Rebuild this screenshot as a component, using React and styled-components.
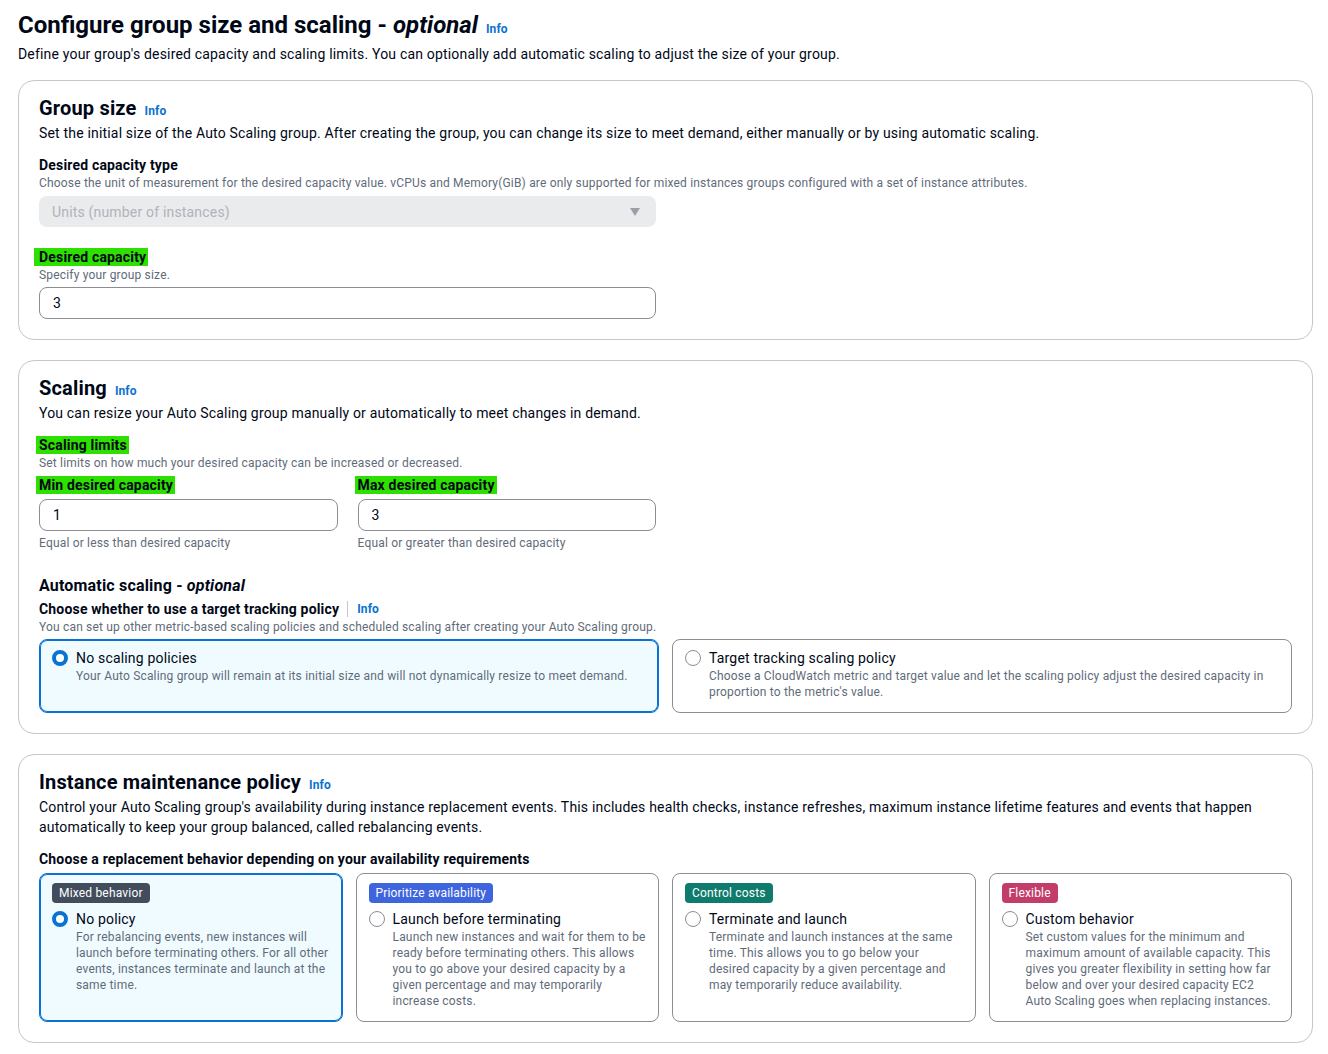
import React from 'react'
import styled, { createGlobalStyle } from 'styled-components'

const GlobalStyle = createGlobalStyle`
  * { box-sizing: border-box; }
  body {
    margin: 0;
    background: #ffffff;
    font-family: Roboto, "Noto Sans", "Liberation Sans", sans-serif;
    letter-spacing: 0.18px;
    color: #000716;
  }
`

const Page = styled.div`
  padding: 10px 15px 12px 18px;
`

const Title = styled.h1`
  margin: 0;
  display: flex;
  align-items: baseline;
  font-size: 24px;
  line-height: 30px;
  font-weight: 700;
  letter-spacing: 0;
  white-space: pre;
  em { font-weight: 700; }
`

const Info = styled.a`
  font-size: 12px;
  line-height: 16px;
  font-weight: 700;
  color: #0972d3;
  margin-left: ${p => p.$gap || 8}px;
  text-decoration: none;
  letter-spacing: 0.1px;
`

const PageDesc = styled.p`
  margin: 4px 0 16px;
  font-size: 14px;
  line-height: 20px;
`

const Container = styled.section`
  border: 1px solid #c6c6cd;
  border-radius: 16px;
  padding: 15px 20px 20px;
  margin-bottom: 20px;
`

const Heading = styled.h2`
  margin: 0 0 3px;
  display: flex;
  align-items: baseline;
  font-size: 20px;
  line-height: 24px;
  font-weight: 700;
`

const Desc = styled.p`
  margin: 0;
  font-size: 14px;
  line-height: 20px;
`

const Field = styled.div`
  margin-top: ${p => p.$top || 0}px;
`

const Label = styled.div`
  display: flex;
  align-items: center;
  font-size: 14px;
  line-height: ${p => (p.$tight ? 18 : 20)}px;
  font-weight: 700;
`

const Marked = styled.span`
  display: inline-block;
  background: #2ee000;
  line-height: 18px;
  margin-left: -${p => p.$pad || 3}px;
  padding: 0 2px 0 ${p => p.$pad || 3}px;
`

const Hint = styled.div`
  margin-top: ${p => p.$top || 0}px;
  font-size: 12px;
  line-height: 16px;
  color: #5f6b7a;
`

const Select = styled.div`
  margin-top: 5px;
  max-width: 617px;
  height: 31px;
  border-radius: 8px;
  background: #e9ebed;
  display: flex;
  align-items: center;
  justify-content: space-between;
  padding: 0 16px 0 13px;
  font-size: 14px;
  color: #b0b3ba;
`

const Arrow = styled.span`
  width: 0;
  height: 0;
  border-left: 5px solid transparent;
  border-right: 5px solid transparent;
  border-top: 8px solid #9ba0a8;
`

const Input = styled.div`
  margin-top: ${p => p.$top || 4}px;
  max-width: 617px;
  height: 32px;
  border: 1px solid #8c8c94;
  border-radius: 8px;
  padding: 0 13px;
  display: flex;
  align-items: center;
  font-size: 14px;
`

const Pair = styled.div`
  display: grid;
  grid-template-columns: 1fr 1fr;
  gap: 20px;
  max-width: 617px;
  margin-top: 5px;
`

const SubHeading = styled.h3`
  margin: 25px 0 3px;
  font-size: 16px;
  line-height: 20px;
  font-weight: 700;
`

const Divider = styled.span`
  display: inline-block;
  width: 1px;
  height: 16px;
  background: #c6c6cd;
  margin-left: 8px;
`

const Tiles = styled.div`
  display: grid;
  grid-template-columns: repeat(${p => p.$cols}, 1fr);
  gap: 13px;
  margin-top: 4px;
`

const Tile = styled.div`
  border: 1px solid ${p => (p.$on ? '#0972d3' : '#8c8c94')};
  box-shadow: ${p => (p.$on ? 'inset 0 0 0 1px #0972d3' : 'none')};
  background: ${p => (p.$on ? '#f0fbff' : '#ffffff')};
  border-radius: 8px;
  padding: 8px 12px 12px;
`

const Badge = styled.span`
  display: inline-block;
  background: ${p => p.$bg};
  color: #ffffff;
  font-size: 12px;
  line-height: 20px;
  padding: 0 7px;
  border-radius: 4px;
  margin-bottom: 6px;
`

const Option = styled.div`
  display: flex;
  gap: 8px;
`

const Radio = styled.span`
  flex: none;
  width: 16px;
  height: 16px;
  margin-top: 2px;
  border-radius: 50%;
  background: #ffffff;
  border: ${p => (p.$on ? '4.5px solid #0972d3' : '1.5px solid #8c8c94')};
`

const OptLabel = styled.div`
  font-size: 14px;
  line-height: 20px;
`

function Choice({ on, badge, badgeBg, title, text }) {
  return (
    <Tile $on={on}>
      {badge && <Badge $bg={badgeBg}>{badge}</Badge>}
      <Option>
        <Radio $on={on} />
        <div>
          <OptLabel>{title}</OptLabel>
          <Hint>{text}</Hint>
        </div>
      </Option>
    </Tile>
  )
}

const behaviors = [
  {
    badge: 'Mixed behavior', bg: '#414d5c', title: 'No policy', on: true,
    text: 'For rebalancing events, new instances will launch before terminating others. For all other events, instances terminate and launch at the same time.'
  },
  {
    badge: 'Prioritize availability', bg: '#3e64de', title: 'Launch before terminating',
    text: 'Launch new instances and wait for them to be ready before terminating others. This allows you to go above your desired capacity by a given percentage and may temporarily increase costs.'
  },
  {
    badge: 'Control costs', bg: '#0f7b6c', title: 'Terminate and launch',
    text: 'Terminate and launch instances at the same time. This allows you to go below your desired capacity by a given percentage and may temporarily reduce availability.'
  },
  {
    badge: 'Flexible', bg: '#c33d69', title: 'Custom behavior',
    text: 'Set custom values for the minimum and maximum amount of available capacity. This gives you greater flexibility in setting how far below and over your desired capacity EC2 Auto Scaling goes when replacing instances.'
  }
]

export default function App() {
  return (
    <Page>
      <GlobalStyle />
      <Title>
        Configure group size and scaling - <em>optional</em>
        <Info>Info</Info>
      </Title>
      <PageDesc>
        Define your group's desired capacity and scaling limits. You can optionally add automatic scaling to adjust the size of your group.
      </PageDesc>

      <Container>
        <Heading>Group size<Info>Info</Info></Heading>
        <Desc>
          Set the initial size of the Auto Scaling group. After creating the group, you can change its size to meet demand, either manually or by using automatic scaling.
        </Desc>
        <Field $top={12}>
          <Label>Desired capacity type</Label>
          <Hint>
            Choose the unit of measurement for the desired capacity value. vCPUs and Memory(GiB) are only supported for mixed instances groups configured with a set of instance attributes.
          </Hint>
          <Select>
            Units (number of instances)
            <Arrow />
          </Select>
        </Field>
        <Field $top={21}>
          <Label $tight><Marked $pad={5}>Desired capacity</Marked></Label>
          <Hint $top={1}>Specify your group size.</Hint>
          <Input>3</Input>
        </Field>
      </Container>

      <Container>
        <Heading>Scaling<Info>Info</Info></Heading>
        <Desc>You can resize your Auto Scaling group manually or automatically to meet changes in demand.</Desc>
        <Field $top={13}>
          <Label $tight><Marked>Scaling limits</Marked></Label>
          <Hint $top={1}>Set limits on how much your desired capacity can be increased or decreased.</Hint>
        </Field>
        <Pair>
          <div>
            <Label $tight><Marked>Min desired capacity</Marked></Label>
            <Input $top={5}>1</Input>
            <Hint $top={4}>Equal or less than desired capacity</Hint>
          </div>
          <div>
            <Label $tight><Marked>Max desired capacity</Marked></Label>
            <Input $top={5}>3</Input>
            <Hint $top={4}>Equal or greater than desired capacity</Hint>
          </div>
        </Pair>
        <SubHeading>Automatic scaling - <em>optional</em></SubHeading>
        <Label>
          Choose whether to use a target tracking policy
          <Divider />
          <Info $gap={9}>Info</Info>
        </Label>
        <Hint>You can set up other metric-based scaling policies and scheduled scaling after creating your Auto Scaling group.</Hint>
        <Tiles $cols={2}>
          <Choice
            on
            title="No scaling policies"
            text="Your Auto Scaling group will remain at its initial size and will not dynamically resize to meet demand."
          />
          <Choice
            title="Target tracking scaling policy"
            text="Choose a CloudWatch metric and target value and let the scaling policy adjust the desired capacity in proportion to the metric's value."
          />
        </Tiles>
      </Container>

      <Container>
        <Heading>Instance maintenance policy<Info>Info</Info></Heading>
        <Desc>
          Control your Auto Scaling group's availability during instance replacement events. This includes health checks, instance refreshes, maximum instance lifetime features and events that happen automatically to keep your group balanced, called rebalancing events.
        </Desc>
        <Field $top={12}>
          <Label>Choose a replacement behavior depending on your availability requirements</Label>
        </Field>
        <Tiles $cols={4}>
          {behaviors.map(b => (
            <Choice key={b.title} on={b.on} badge={b.badge} badgeBg={b.bg} title={b.title} text={b.text} />
          ))}
        </Tiles>
      </Container>
    </Page>
  )
}
